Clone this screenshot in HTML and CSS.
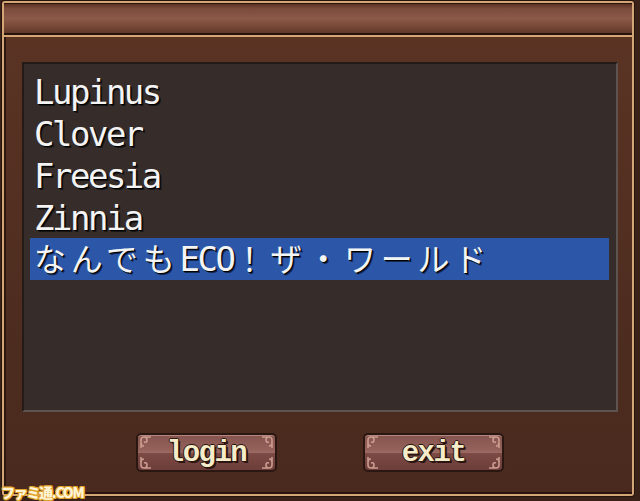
FILE: index.html
```html
<!DOCTYPE html>
<html lang="ja">
  <head>
    <meta charset="UTF-8" />
    <title>Server select</title>
    <link rel="stylesheet" href="styles.css">
  </head>
  <body>
    <div class="window">
      <div class="titlebar"></div>
      <div class="content">
        <ul class="list">
          <li>Lupinus</li>
          <li>Clover</li>
          <li>Freesia</li>
          <li>Zinnia</li>
          <li class="selected"><span class="jp">なんでも</span>ECO<span class="jp">！ザ・ワールド</span></li>
        </ul>
        <div class="buttons">
          <button class="btn">
            <svg class="orn" width="14" height="35" viewBox="0 0 14 35">
              <path d="M2 13 V5 Q2 2 5 2 H12 M5 2 Q8 2 8 5 Q8 8 5 7 M2 8 Q2 11 5 11" />
              <path d="M2 22 V30 Q2 33 5 33 H12 M5 33 Q8 33 8 30 Q8 27 5 28 M2 27 Q2 24 5 24" />
            </svg>
            <span>login</span>
            <svg class="orn flip" width="14" height="35" viewBox="0 0 14 35">
              <path d="M2 13 V5 Q2 2 5 2 H12 M5 2 Q8 2 8 5 Q8 8 5 7 M2 8 Q2 11 5 11" />
              <path d="M2 22 V30 Q2 33 5 33 H12 M5 33 Q8 33 8 30 Q8 27 5 28 M2 27 Q2 24 5 24" />
            </svg>
          </button>
          <button class="btn">
            <svg class="orn" width="14" height="35" viewBox="0 0 14 35">
              <path d="M2 13 V5 Q2 2 5 2 H12 M5 2 Q8 2 8 5 Q8 8 5 7 M2 8 Q2 11 5 11" />
              <path d="M2 22 V30 Q2 33 5 33 H12 M5 33 Q8 33 8 30 Q8 27 5 28 M2 27 Q2 24 5 24" />
            </svg>
            <span>exit</span>
            <svg class="orn flip" width="14" height="35" viewBox="0 0 14 35">
              <path d="M2 13 V5 Q2 2 5 2 H12 M5 2 Q8 2 8 5 Q8 8 5 7 M2 8 Q2 11 5 11" />
              <path d="M2 22 V30 Q2 33 5 33 H12 M5 33 Q8 33 8 30 Q8 27 5 28 M2 27 Q2 24 5 24" />
            </svg>
          </button>
        </div>
      </div>
    </div>
    <!-- watermark of the source site -->
    <div class="watermark">ファミ通.COM</div>
  </body>
</html>
```

FILE: styles.css
```css
* {
  margin: 0;
  padding: 0;
  box-sizing: border-box;
}

html,
body {
  width: 640px;
  height: 501px;
  overflow: hidden;
}

body {
  position: relative;
  background-color: #3a2218;
}

.window {
  display: flex;
  flex-direction: column;
  width: 632px;
  height: 495px;
  margin: 1px 6px 5px 2px;
  border: 2px solid #d4a676;
  border-radius: 3px;
  box-shadow: 0 0 0 1px #24140d;
}

.titlebar {
  height: 32px;
  background: linear-gradient(#5a3122 0%, #7a4a3a 15%, #8b5a48 50%, #7a4a38 75%, #62382a 100%);
  border-top: 1px solid #2a160e;
  border-bottom: 2px solid #26140c;
}

.content {
  flex: 1;
  display: flex;
  flex-direction: column;
  padding: 25px 14px 0 18px;
  background: linear-gradient(#5a3323, #4e2d20 60%, #4a2a1e);
  border-top: 2px solid #d4a676;
  border-bottom: 2px solid #26140c;
  box-shadow: inset 2px 0 0 #2c1810;
}

.list {
  list-style: none;
  height: 350px;
  padding: 6px 7px 0 6px;
  background-color: #362d2a;
  border: 2px solid #5d5350;
  border-top-color: #241b18;
  border-left-color: #241b18;
  font-family: "DejaVu Sans Mono", "Noto Sans CJK JP", monospace;
  font-size: 34px;
  letter-spacing: -2.5px;
  color: #f4f4f4;
  text-shadow: 1px 1px 0 #000, 2px 2px 0 rgba(0, 0, 0, 0.55);
}

.list li {
  height: 42px;
  line-height: 44px;
  padding-left: 4px;
  white-space: nowrap;
}

.list .selected {
  line-height: 42px;
  background-color: #2c57a8;
}

.jp {
  font-size: 32px;
  letter-spacing: 4.8px;
}

.buttons {
  display: flex;
  justify-content: center;
  gap: 86px;
  margin-top: 21px;
}

.btn {
  display: flex;
  align-items: center;
  justify-content: space-between;
  width: 141px;
  height: 39px;
  padding: 0 1px;
  border: 2px solid #2b1712;
  border-radius: 5px;
  background: linear-gradient(#86544e 0%, #93605a 40%, #9d6962 50%, #7c4a45 53%, #6c3d39 100%);
  box-shadow: inset 0 1px 0 #b5867d;
  font-family: "Liberation Mono", monospace;
  font-weight: bold;
  font-size: 29px;
  letter-spacing: -1.5px;
  color: #f6ecc9;
  text-shadow: 1px 0 0 #2a1510, -1px 0 0 #2a1510, 0 1px 0 #2a1510, 0 -1px 0 #2a1510,
    2px 2px 0 #2a1510;
}

.btn span {
  margin-top: 2px;
}

.orn {
  fill: none;
  stroke: #cb9b8f;
  stroke-width: 1.6;
}

.flip {
  transform: scaleX(-1);
}

.watermark {
  position: absolute;
  left: 1px;
  bottom: 0;
  line-height: 17px;
  font-family: "Noto Sans CJK JP", sans-serif;
  font-weight: 900;
  font-size: 14px;
  letter-spacing: -1.3px;
  color: #fff4d6;
  text-shadow: 1px 0 0 #e0a22c, -1px 0 0 #e0a22c, 0 1px 0 #e0a22c, 0 -1px 0 #e0a22c,
    1px 1px 0 #e0a22c, -1px -1px 0 #e0a22c, 1px -1px 0 #e0a22c, -1px 1px 0 #e0a22c;
}
```
